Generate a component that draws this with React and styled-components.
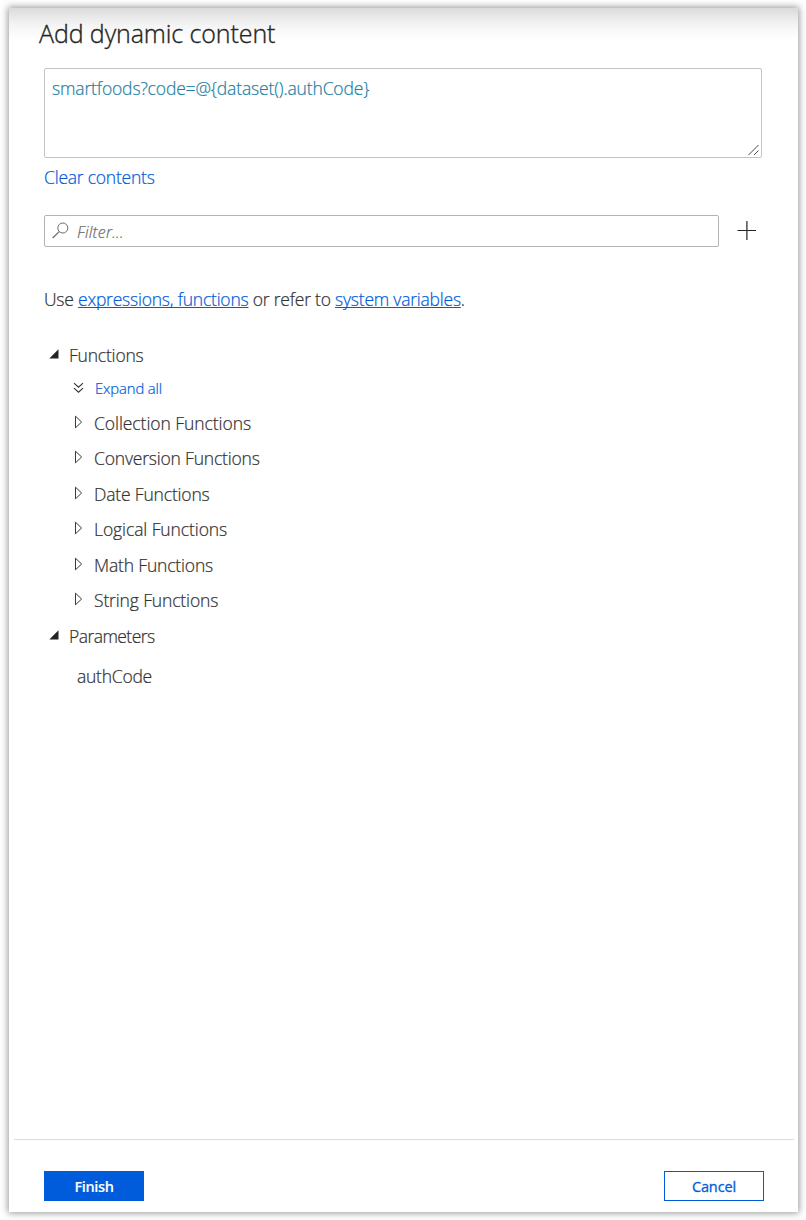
import React from 'react';
import styled, { createGlobalStyle } from 'styled-components';

const Global = createGlobalStyle`
  *, *::before, *::after { box-sizing: border-box; }
  body { margin: 0; background: #fff; overflow: hidden; }
  button, textarea, input { font-family: inherit; }
`;

const Page = styled.div`
  width: 806px;
  height: 1220px;
  padding: 8px 8px 8px 9px;
  background: #fff;
  font-family: "Open Sans", "Noto Sans", sans-serif;
  font-size: 17.5px;
  font-weight: 300;
  -webkit-text-stroke: 0.22px currentColor;
  color: #323130;
`;

const Panel = styled.main`
  display: flex;
  flex-direction: column;
  width: 789px;
  height: 1204px;
  background: linear-gradient(#dadada 0, #e9e9e9 9px, #f6f6f6 19px, #fff 32px) #fff;
  box-shadow: 0 0 7px 1px rgba(0, 0, 0, 0.42);
`;

const Title = styled.h1`
  margin: 0;
  padding: 7px 0 0 30px;
  height: 60px;
  font-size: 25px;
  line-height: 36px;
  font-weight: 300;
  letter-spacing: -0.1px;
  -webkit-text-stroke-width: 0.35px;
  color: #252423;
`;

const Content = styled.div`
  flex: 1;
  padding: 0 36px 0 35px;
`;

const Expression = styled.div`
  display: flex;
  justify-content: space-between;
  height: 90px;
  padding: 6px 1px 1px 7px;
  border: 1px solid #c4c4c4;
  border-radius: 2px;
  background: #fff;
  line-height: 26px;
  letter-spacing: -0.15px;
  color: #1f7fa3;
`;

const Grip = styled.svg`
  align-self: flex-end;
  width: 12px;
  height: 12px;
`;

const ClearLink = styled.a`
  display: block;
  margin-top: 6px;
  height: 26px;
  line-height: 26px;
  letter-spacing: -0.22px;
  color: #005cda;
`;

const FilterRow = styled.div`
  display: flex;
  align-items: center;
  margin-top: 25px;
  gap: 18px;
`;

const FilterBox = styled.div`
  display: flex;
  width: 675px;
  height: 32px;
  padding: 0 7px;
  border: 1px solid #b3b3b3;
  border-radius: 2px;
  svg { margin-top: 6px; }
`;

const Placeholder = styled.span`
  margin-left: 8px;
  font-size: 16px;
  line-height: 33px;
  font-style: italic;
  letter-spacing: 0.2px;
  color: #6b6b6b;
`;

const Hint = styled.p`
  margin: 39px 0 0;
  line-height: 26px;
  letter-spacing: -0.22px;
  a {
    color: #005cda;
    text-decoration: underline;
    text-decoration-thickness: 1px;
    text-underline-offset: 1px;
    text-decoration-skip-ink: none;
  }
`;

const Tree = styled.div`
  padding-top: 25px;
`;

const Group = styled.div`
  padding: 1px 0 0 30px;
`;

const Row = styled.div`
  display: flex;
  align-items: center;
  height: ${(p) => p.$height || 35.5}px;
  padding-left: ${(p) => p.$indent || 0}px;
  svg { flex: none; margin-right: ${(p) => p.$gap}px; }
`;

const Label = styled.span`
  font-size: ${(p) => p.$size || 17.5}px;
  letter-spacing: ${(p) => p.$track || '-0.2px'};
  color: ${(p) => p.$color || 'inherit'};
  white-space: nowrap;
`;

const Footer = styled.footer`
  display: flex;
  justify-content: space-between;
  height: 73px;
  margin: 0 4px 0 5px;
  padding: 31px 30px 0;
  border-top: 1px solid #dcdcdc;
`;

const Button = styled.button`
  width: 100px;
  height: 30px;
  padding: 1px 0 0;
  border: 1px solid #005cda;
  background: ${(p) => (p.$primary ? '#005cda' : '#fff')};
  color: ${(p) => (p.$primary ? '#fff' : '#005cda')};
  font-size: 14.5px;
  font-weight: ${(p) => (p.$primary ? 600 : 400)};
  -webkit-text-stroke-width: ${(p) => (p.$primary ? '0.1px' : '0.3px')};
  line-height: 27px;
  letter-spacing: ${(p) => p.$track};
`;

const Opened = () => (
  <svg width="10" height="12" viewBox="0 0 10 12">
    <path d="M9.5 0.3V9.5H0.3Z" fill="#252423" />
  </svg>
);

const Closed = () => (
  <svg width="8" height="16" viewBox="0 0 8 16">
    <path d="M1.5 1.2V12.8L7.6 7Z" fill="none" stroke="#3b3a39" strokeWidth="1" />
  </svg>
);

const DoubleChevron = () => (
  <svg width="12" height="12" viewBox="0 0 12 12" fill="none" stroke="#323130">
    <path d="M1 1.2L5.5 5.2L10 1.2M1 6.2L5.5 10.2L10 6.2" strokeWidth="1.1" />
  </svg>
);

const GROUPS = [
  ['Collection Functions', '-0.06px'],
  ['Conversion Functions', '-0.19px'],
  ['Date Functions', '-0.17px'],
  ['Logical Functions', '-0.09px'],
  ['Math Functions', '-0.17px'],
  ['String Functions', '-0.14px'],
];

export default function App() {
  return (
    <Page>
      <Global />
      <Panel>
        <Title>Add dynamic content</Title>
        <Content>
          <Expression>
            <span>{'smartfoods?code=@{dataset().authCode}'}</span>
            <Grip viewBox="0 0 12 12" stroke="#4a4a4a" fill="none">
              <path d="M0.5 11L10.5 1M6 11L10.5 6.5" />
            </Grip>
          </Expression>
          <ClearLink>Clear contents</ClearLink>
          <FilterRow>
            <FilterBox>
              <svg width="17" height="17" viewBox="0 0 17 17" fill="none" stroke="#6b6b6b">
                <circle cx="10.8" cy="6" r="5" />
                <path d="M7.2 9.6L0.7 16" strokeWidth="1.2" />
              </svg>
              <Placeholder>Filter...</Placeholder>
            </FilterBox>
            <svg width="20" height="20" viewBox="0 0 20 20" stroke="#252423" fill="none">
              <path d="M0.5 9.5H19" />
              <path d="M9.9 0V19" strokeWidth="1.2" />
            </svg>
          </FilterRow>
          <Hint>
            Use <a>expressions, functions</a> or refer to <a>system variables</a>.
          </Hint>
          <Tree>
            <Row $height={35} $indent={5} $gap={10}>
              <Opened />
              <Label>Functions</Label>
            </Row>
            <Row $height={32} $indent={29} $gap={10}>
              <DoubleChevron />
              <Label $size={14.8} $track="-0.1px" $color="#005cda">Expand all</Label>
            </Row>
            <Group>
              {GROUPS.map(([name, track]) => (
                <Row key={name} $gap={12}>
                  <Closed />
                  <Label $track={track}>{name}</Label>
                </Row>
              ))}
            </Group>
            <Row $height={36} $indent={5} $gap={10}>
              <Opened />
              <Label $track="-0.55px">Parameters</Label>
            </Row>
            <Row $height={44} $indent={33}>
              <Label $track="-0.25px">authCode</Label>
            </Row>
          </Tree>
        </Content>
        <Footer>
          <Button $primary $track="-0.4px">Finish</Button>
          <Button $track="-0.1px">Cancel</Button>
        </Footer>
      </Panel>
    </Page>
  );
}
